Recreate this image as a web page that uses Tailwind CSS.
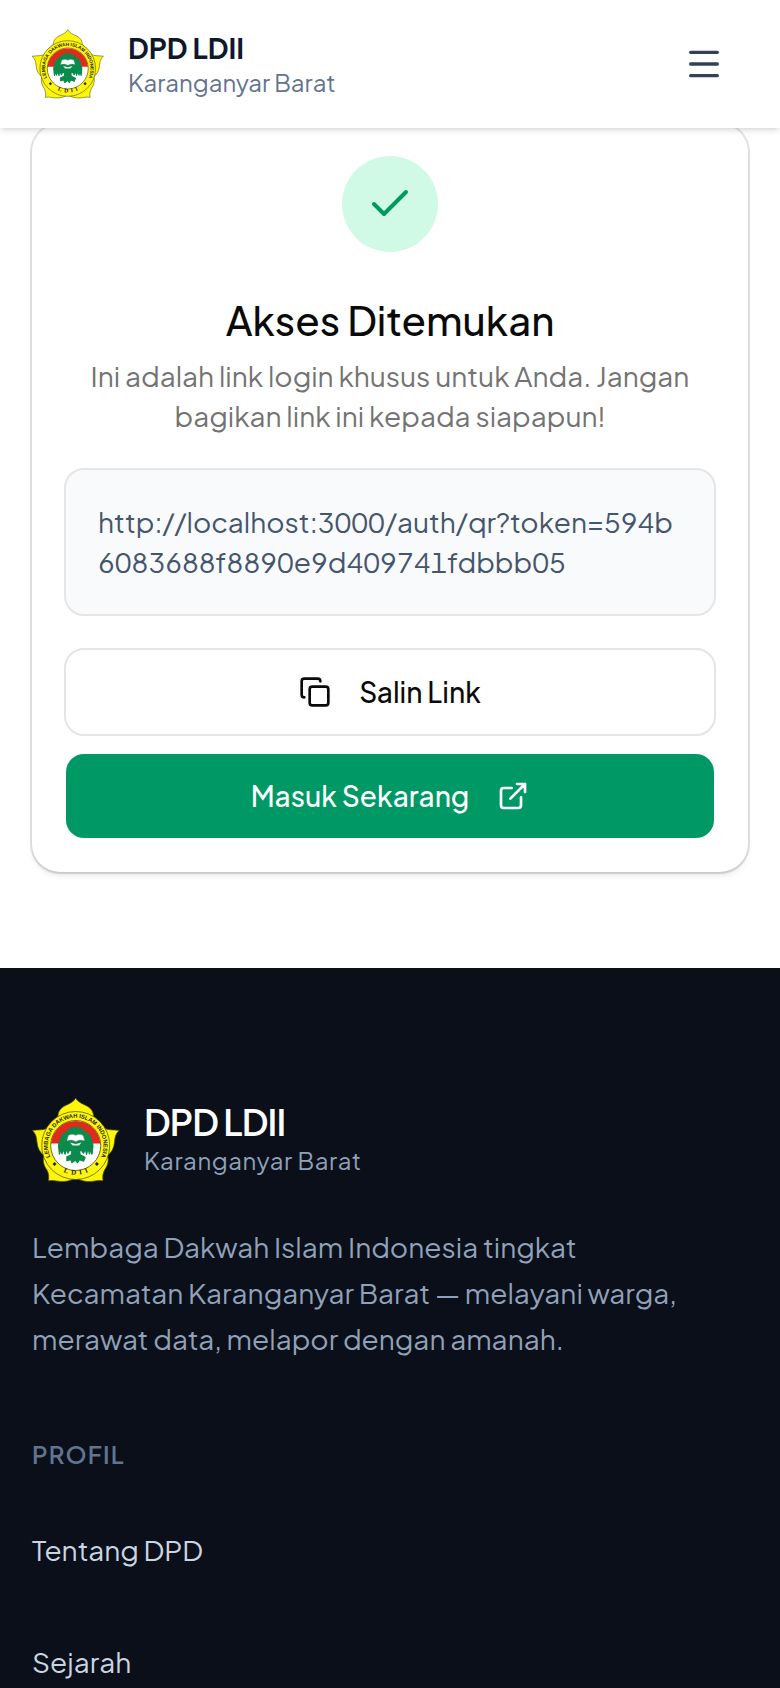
<!DOCTYPE html>
<html lang="id">
  <head>
    <meta charset="UTF-8" />
    <meta name="viewport" content="width=device-width, initial-scale=1.0" />
    <title>DPD LDII Karanganyar Barat</title>
    <script src="https://cdn.jsdelivr.net/npm/@tailwindcss/browser@4"></script>
  </head>
  <body class="bg-white font-['Plus_Jakarta_Sans',Inter,sans-serif] text-neutral-950">
    <!-- Shared logo -->
    <svg class="absolute size-0" aria-hidden="true">
      <defs>
        <path id="arcTop" d="M18.8 62A27.8 27.8 0 1 1 68.6 62" />
        <path id="arcBottom" d="M20 66.8A29.5 29.5 0 0 0 67.4 66.8" />
        <symbol id="logo" viewBox="0 0 88 88">
          <path
            d="M43.7 2C45.500 6 50 7.500 54.500 9.800C59.500 12.500 61.500 16 61.500 20.500C66 23.500 69 27 71.500 32C76 34.500 81 33.500 87.200 34.500C83.500 38 83 41 82.500 46C82 52 79.500 56.500 75.500 59.500C77 63.500 76 69.500 72.800 73.500C70.500 77.500 70.500 81 71 84.800C66 83.500 61 86 55.500 85.500C50.500 85 47 84 43.700 81.500C40.400 84 37 85 32 85.500C26.500 86 21.500 83.500 16.500 84.800C17 81 17 77.500 14.700 73.500C11.500 69.500 10.500 63.500 12 59.500C8 56.500 5.500 52 5 46C4.500 41 4 38 .3 34.500C6.500 33.500 11.500 34.500 16 32C18.500 27 21.500 23.500 26 20.500C26 16 28 12.500 33 9.800C37.500 7.500 42 6 43.700 2Z"
            fill="#fdf50a" stroke="#55520c" stroke-width=".7" stroke-linejoin="round"
          />
          <circle cx="43.7" cy="49.5" r="34" fill="#fdf50a" stroke="#4b490d" stroke-width=".7" />
          <circle cx="43.7" cy="49.5" r="25" fill="#fff" stroke="#4b490d" stroke-width=".8" />
          <path d="M19 47.5A24.800 24.800 0 0 1 68.400 47.500Z" fill="#df2a1c" />
          <path
            d="M43.700 31.500C48 31.500 51 33.500 53 36.500C57 37.500 59 41 59 45C61.500 47 61 50 60.500 53L60 58L58.500 52L57.500 57.500L56 52L54.500 58L53.500 52.500L51.500 57L49.500 54L47.500 55L48 59L53 61.500L51.500 65L47.500 63.500L45.500 66.500L43.500 64L40 66.500L39 63.500L35 64.500L35 61L39.500 59L40 55L37.500 54L36 57L34 52.500L33 58L31.500 52L30 57.500L28.500 52L27.500 58L27 53C26.500 50 26 47 28.500 45C28.500 41 31 37.500 34.500 36.500C36.500 33.500 39.500 31.500 43.700 31.500Z"
            fill="#0b8b4b" stroke="#0b8b4b" stroke-width="1.5" stroke-linejoin="round"
          />
          <path
            d="M36.500 39.500C39 38 42 38.200 43.700 39.500C45.500 38.200 48.500 38 51 39.500L52.500 44.500C49 43.500 46 44 43.700 45.500C41.500 44 38.500 43.500 35 44.500Z"
            fill="#fff" stroke="#9fb7a8" stroke-width=".5"
          />
          <path d="M38 46.500L43.700 48L49.500 46.500L47 49.500H40.500Z" fill="#e9f2ec" />
          <text class="font-['Liberation_Sans'] text-[5.8px] font-bold" fill="#25250c" text-anchor="middle">
            <textPath href="#arcTop" startOffset="50%">LEMBAGA DAKWAH ISLAM INDONESIA</textPath>
          </text>
          <text class="font-['Liberation_Serif'] text-[7px] font-bold" fill="#25250c" text-anchor="middle">
            <textPath href="#arcBottom" startOffset="50%">L&#160; D&#160; I&#160; I</textPath>
          </text>
          <path d="M22.500 66l2 2-2 2-2-2zM64.900 66l2 2-2 2-2-2z" fill="#25250c" />
        </symbol>
      </defs>
    </svg>

    <!-- Header -->
    <header class="sticky top-0 z-10 flex h-32 items-center justify-between bg-white px-8 shadow-md">
      <a href="#" class="flex items-center gap-6">
        <svg class="size-[72px]" role="img" aria-label="Logo LDII"><use href="#logo" /></svg>
        <span class="flex flex-col">
          <span class="text-[28px] leading-9 font-bold text-slate-900">DPD LDII</span>
          <span class="text-2xl leading-8 text-slate-500">Karanganyar Barat</span>
        </span>
      </a>
      <button type="button" aria-label="Buka menu" class="flex size-[88px] items-center justify-center text-slate-700">
        <svg class="size-10" viewBox="0 0 24 24" fill="none" stroke="currentColor" stroke-width="2" stroke-linecap="round">
          <path d="M4 5h16M4 12h16M4 19h16" />
        </svg>
      </button>
    </header>

    <!-- Access card -->
    <main class="-mt-1 px-8 pb-24">
      <section class="rounded-[28px] bg-white p-8 shadow-md ring-2 ring-neutral-950/10">
        <div class="mx-auto flex size-24 items-center justify-center rounded-full bg-emerald-100 text-emerald-600">
          <svg class="size-12" viewBox="0 0 24 24" fill="none" stroke="currentColor" stroke-width="2" stroke-linecap="round" stroke-linejoin="round">
            <path d="M20 6 9 17l-5-5" />
          </svg>
        </div>
        <h1 class="mt-10 text-center text-[40px] leading-14 font-medium">Akses Ditemukan</h1>
        <p class="mt-2 text-center text-[28px] leading-10 text-neutral-500">
          Ini adalah link login khusus untuk Anda. Jangan bagikan link ini kepada siapapun!
        </p>

        <div class="mt-8 rounded-[20px] border-2 border-neutral-200 bg-slate-50 p-8 text-[28px] leading-10 break-all text-slate-600 tabular-nums">
          http://localhost:3000/auth/qr?token=594b6083688f8890e9d409741fdbbb05
        </div>

        <div class="mt-8 flex flex-col gap-4">
          <button type="button" class="flex h-[88px] items-center justify-center gap-7 rounded-[20px] border-2 border-neutral-200 text-[28px] font-medium">
            <svg class="size-8" viewBox="0 0 24 24" fill="none" stroke="currentColor" stroke-width="2" stroke-linecap="round" stroke-linejoin="round">
              <rect x="8" y="8" width="14" height="14" rx="2" />
              <path d="M4 16c-1.100 0-2-.9-2-2V4c0-1.100.9-2 2-2h10c1.100 0 2 .9 2 2" />
            </svg>
            Salin Link
          </button>
          <a href="#" class="flex h-[88px] items-center justify-center gap-7 rounded-[20px] border-2 border-transparent bg-emerald-600 bg-clip-padding text-[28px] font-medium text-white">
            Masuk Sekarang
            <svg class="size-8" viewBox="0 0 24 24" fill="none" stroke="currentColor" stroke-width="2" stroke-linecap="round" stroke-linejoin="round">
              <path d="M15 3h6v6M10 14 21 3M18 13v6a2 2 0 0 1-2 2H5a2 2 0 0 1-2-2V8a2 2 0 0 1 2-2h6" />
            </svg>
          </a>
        </div>
      </section>
    </main>

    <!-- Footer -->
    <footer class="bg-[#0a0f1a] px-8 pt-32">
      <div class="flex items-center gap-6">
        <svg class="size-[88px]" role="img" aria-label="Logo LDII"><use href="#logo" /></svg>
        <div>
          <p class="text-4xl leading-10 font-semibold tracking-tight text-white">DPD LDII</p>
          <p class="text-2xl leading-9 tracking-wide text-slate-400">Karanganyar Barat</p>
        </div>
      </div>
      <p class="mt-10 max-w-2xl text-[28px] leading-[46px] text-slate-400">
        Lembaga Dakwah Islam Indonesia tingkat Kecamatan Karanganyar Barat — melayani warga, merawat data, melapor dengan amanah.
      </p>
      <nav aria-labelledby="profil">
        <h2 id="profil" class="mt-20 text-2xl leading-6 font-semibold tracking-wider text-slate-500">PROFIL</h2>
        <ul class="mt-10 flex flex-col gap-6 text-[28px] text-slate-300">
          <li><a href="#" class="flex h-[88px] items-center">Tentang DPD</a></li>
          <li><a href="#" class="flex h-[88px] items-center">Sejarah</a></li>
        </ul>
      </nav>
    </footer>
  </body>
</html>
